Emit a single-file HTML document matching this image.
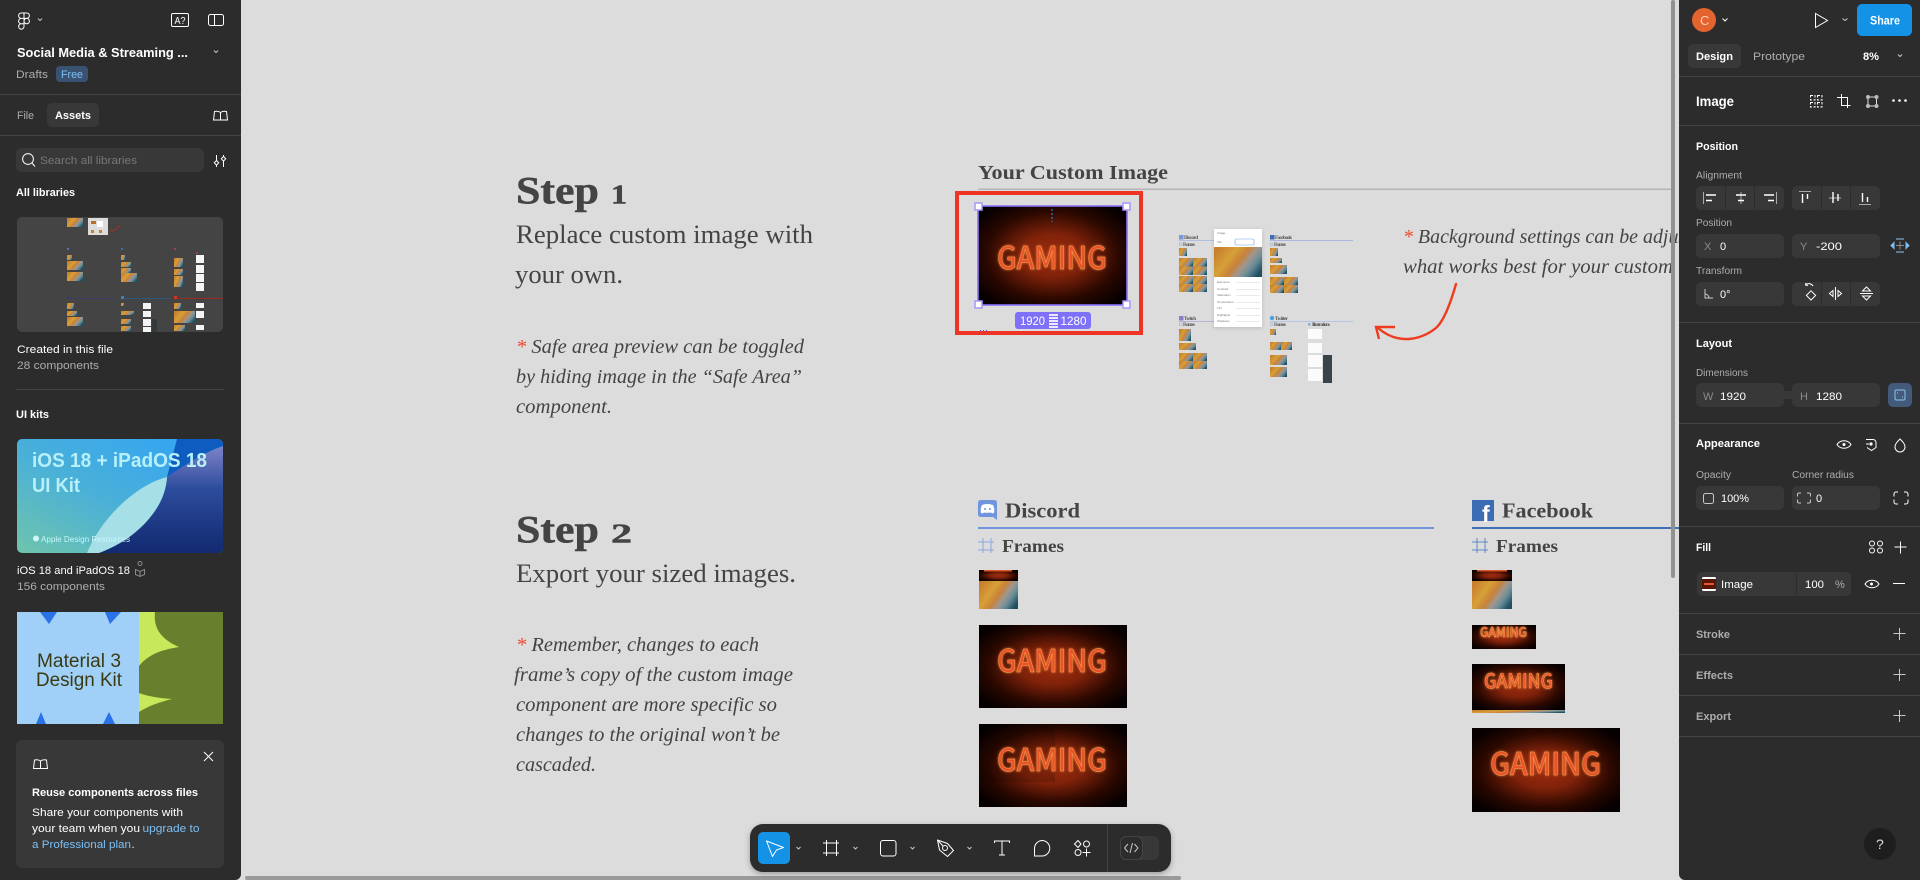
<!DOCTYPE html>
<html lang="en">
<head>
<meta charset="utf-8">
<title>Social Media &amp; Streaming</title>
<style>
html,body{margin:0;padding:0;width:1920px;height:880px;overflow:hidden;background:#dcdcdc}
.abs{position:absolute}
#lp{left:0;top:0;width:241px;height:880px;background:#2c2c2c;border-radius:0 0 6px 0}
#rp{left:1679px;top:0;width:241px;height:880px;background:#2c2c2c;border-radius:0 0 0 6px}
#tb{left:750px;top:824px;width:421px;height:48px;background:#2c2c2c;border-radius:13px;box-shadow:0 2px 6px rgba(0,0,0,.3)}
#cv,#ui{position:absolute;left:0;top:0}
.s{font-family:"Liberation Serif",serif;fill:#444}
.hv{font-weight:bold;stroke:#444;stroke-width:.5}
.si{font-family:"Liberation Serif",serif;font-style:italic;fill:#444;font-size:20px}
.u{font-family:"Liberation Sans",sans-serif;font-size:11px;fill:#fff}
.b{font-weight:bold}
.g{fill:#adadad}
.d{fill:#8a8a8a}
.lnk{fill:#7cc0f5}
.ln{fill:none;stroke:#fff;stroke-width:1}
.lg{fill:none;stroke:#c8c8c8;stroke-width:1}
.gm{font-family:"Noto Sans CJK JP","Liberation Sans",sans-serif;font-weight:500;fill:#e8522a;stroke:#f8a24c;stroke-width:.5;filter:url(#glow)}
.t3{font-family:"Liberation Sans",sans-serif;font-size:3px;fill:#777}
.t4{font-family:"Liberation Serif",serif;font-weight:bold;font-size:5px;fill:#555}
</style>
</head>
<body>
<svg id="cv" width="1920" height="880" viewBox="0 0 1920 880">
<defs>
<radialGradient id="rg" cx=".5" cy=".5" r=".62">
<stop offset="0" stop-color="#9c2c0e"/><stop offset=".35" stop-color="#80220a"/><stop offset=".72" stop-color="#2a0800"/><stop offset="1" stop-color="#060000"/>
</radialGradient>
<linearGradient id="mg" x1="0" y1=".25" x2="1" y2=".75">
<stop offset="0" stop-color="#c9802e"/><stop offset=".3" stop-color="#d6a038"/><stop offset=".5" stop-color="#c8823a"/><stop offset=".65" stop-color="#a0968e"/><stop offset=".8" stop-color="#6a8e98"/><stop offset="1" stop-color="#1f4f62"/>
</linearGradient>
<filter id="glow" x="-20%" y="-40%" width="140%" height="180%">
<feGaussianBlur stdDeviation="1.3" result="b"/><feMerge><feMergeNode in="b"/><feMergeNode in="SourceGraphic"/></feMerge>
</filter>
</defs>
<rect width="1920" height="880" fill="#dcdcdc"/>

<!-- Step 1 -->
<text class="s hv" x="516" y="203.5" font-size="39" textLength="83" lengthAdjust="spacingAndGlyphs">Step</text>
<text class="s hv" x="611" y="203.5" font-size="27" textLength="16" lengthAdjust="spacingAndGlyphs">1</text>
<text class="s" x="516" y="243" font-size="26" textLength="297" lengthAdjust="spacingAndGlyphs">Replace custom image with</text>
<text class="s" x="515" y="283" font-size="26" textLength="108" lengthAdjust="spacingAndGlyphs">your own.</text>
<text class="si" x="516" y="353" textLength="288" lengthAdjust="spacingAndGlyphs"><tspan fill="#ee4a30">*</tspan> Safe area preview can be toggled</text>
<text class="si" x="516" y="383" textLength="286" lengthAdjust="spacingAndGlyphs">by hiding image in the “Safe Area”</text>
<text class="si" x="516" y="413" textLength="96" lengthAdjust="spacingAndGlyphs">component.</text>

<!-- Step 2 -->
<text class="s hv" x="516" y="542.5" font-size="39" textLength="83" lengthAdjust="spacingAndGlyphs">Step</text>
<text class="s hv" x="611" y="542.5" font-size="27" textLength="21" lengthAdjust="spacingAndGlyphs">2</text>
<text class="s" x="516" y="582" font-size="26" textLength="280" lengthAdjust="spacingAndGlyphs">Export your sized images.</text>
<text class="si" x="516" y="651" textLength="243" lengthAdjust="spacingAndGlyphs"><tspan fill="#ee4a30">*</tspan> Remember, changes to each</text>
<text class="si" x="514" y="681" textLength="279" lengthAdjust="spacingAndGlyphs">frame’s copy of the custom image</text>
<text class="si" x="516" y="711" textLength="261" lengthAdjust="spacingAndGlyphs">component are more specific so</text>
<text class="si" x="516" y="741" textLength="264" lengthAdjust="spacingAndGlyphs">changes to the original won’t be</text>
<text class="si" x="516" y="771" textLength="80" lengthAdjust="spacingAndGlyphs">cascaded.</text>

<!-- Your custom image -->
<text class="s" font-weight="bold" x="978" y="179" font-size="20" textLength="190" lengthAdjust="spacingAndGlyphs">Your Custom Image</text>
<rect x="978" y="188.5" width="697" height="1.5" fill="#b5b5b5"/>
<rect x="957" y="193" width="184" height="140" fill="none" stroke="#ee3424" stroke-width="4"/>
<rect x="978" y="206" width="149" height="99" fill="url(#rg)"/>
<text class="gm" x="997" y="269" font-size="31" textLength="110" lengthAdjust="spacingAndGlyphs">GAMING</text>
<line x1="1052" y1="209" x2="1052" y2="222" stroke="#18a0fb" stroke-width="1" stroke-dasharray="2 2"/>
<rect x="978" y="206" width="149" height="99" fill="none" stroke="#8a72f8" stroke-width="1.6"/>
<g fill="#fff" stroke="#a896fa" stroke-width="1.5">
<rect x="975" y="203" width="7" height="7"/><rect x="1123" y="203" width="7" height="7"/><rect x="975" y="301" width="7" height="7"/><rect x="1123" y="301" width="7" height="7"/>
</g>
<rect x="1015" y="312" width="76" height="17" rx="3" fill="#7f70fa"/>
<text class="u" x="1020" y="325" style="font-size:12px" textLength="25" lengthAdjust="spacingAndGlyphs">1920</text>
<text class="u" x="1060.5" y="325" style="font-size:12px" textLength="26" lengthAdjust="spacingAndGlyphs">1280</text>
<g fill="#fff" opacity=".85"><rect x="1049" y="314" width="9" height="2"/><rect x="1049" y="317" width="9" height="2"/><rect x="1049" y="320" width="9" height="2"/><rect x="1049" y="323" width="9" height="2"/><rect x="1049" y="326" width="9" height="2"/></g>
<g fill="#5a50e0"><rect x="980" y="330" width="1" height="1.4"/><rect x="983" y="330" width="1" height="1.4"/><rect x="986" y="330" width="1" height="1.4"/></g>

<!-- mini map -->
<g>
<rect x="1179" y="235" width="4.5" height="4.5" fill="#7a9ade"/>
<text class="t4" x="1184" y="239" textLength="14">Discord</text>
<rect x="1179" y="240" width="36" height=".8" fill="#a8b8e0"/>
<rect x="1179.5" y="243" width="2.5" height="2.5" fill="none" stroke="#9ab" stroke-width=".5"/>
<text class="t4" x="1183" y="246" textLength="12">Frames</text>
<rect x="1179" y="248" width="8" height="8" fill="url(#mg)"/>
<rect x="1179" y="258" width="14" height="8.5" fill="url(#mg)"/><rect x="1193" y="258" width="14" height="8.5" fill="url(#mg)"/><rect x="1179" y="266.5" width="14" height="8.5" fill="url(#mg)"/><rect x="1193" y="266.5" width="14" height="8.5" fill="url(#mg)"/>
<rect x="1179" y="276" width="14" height="8" fill="url(#mg)"/><rect x="1193" y="276" width="14" height="8" fill="url(#mg)"/><rect x="1179" y="284" width="14" height="8" fill="url(#mg)"/><rect x="1193" y="284" width="14" height="8" fill="url(#mg)"/>

<rect x="1179" y="316" width="4.5" height="4.5" fill="#8a7ec8"/>
<text class="t4" x="1184" y="320" textLength="12">Twitch</text>
<rect x="1179" y="321" width="36" height=".8" fill="#b0aad6"/>
<rect x="1179.5" y="323" width="2.5" height="2.5" fill="none" stroke="#9ab" stroke-width=".5"/>
<text class="t4" x="1183" y="326" textLength="12">Frames</text>
<rect x="1179" y="329" width="12" height="12" fill="url(#mg)"/>
<rect x="1179" y="343" width="17" height="7" fill="url(#mg)"/>
<rect x="1179" y="353" width="14" height="8" fill="url(#mg)"/><rect x="1193" y="353" width="14" height="8" fill="url(#mg)"/><rect x="1179" y="361" width="14" height="8" fill="url(#mg)"/><rect x="1193" y="361" width="14" height="8" fill="url(#mg)"/>

<rect x="1270" y="235" width="4.5" height="4.5" fill="#3b6cb4"/>
<text class="t4" x="1275" y="239" textLength="17">Facebook</text>
<rect x="1270" y="240" width="83" height=".8" fill="#9ab0da"/>
<rect x="1270.5" y="243" width="2.5" height="2.5" fill="none" stroke="#9ab" stroke-width=".5"/>
<text class="t4" x="1274" y="246" textLength="12">Frames</text>
<rect x="1270" y="248" width="8" height="8" fill="url(#mg)"/>
<rect x="1270" y="258" width="12" height="5" fill="url(#mg)"/>
<rect x="1270" y="265" width="17" height="9" fill="url(#mg)"/>
<rect x="1270" y="277" width="14" height="8" fill="url(#mg)"/><rect x="1284" y="277" width="14" height="8" fill="url(#mg)"/><rect x="1270" y="285" width="14" height="8" fill="url(#mg)"/><rect x="1284" y="285" width="14" height="8" fill="url(#mg)"/>

<circle cx="1272" cy="318" r="2.2" fill="#4a9fe0"/>
<text class="t4" x="1275" y="320" textLength="13">Twitter</text>
<rect x="1270" y="321" width="83" height=".8" fill="#a8c4e4"/>
<rect x="1270.5" y="323" width="2.5" height="2.5" fill="none" stroke="#9ab" stroke-width=".5"/>
<text class="t4" x="1274" y="326" textLength="12">Frames</text>
<rect x="1308" y="323" width="2.5" height="2.5" fill="#8ab0d8"/>
<text class="t4" x="1312" y="326" textLength="18">Illustrations</text>
<rect x="1270" y="329" width="6" height="6" fill="url(#mg)"/>
<rect x="1270" y="342" width="11" height="8" fill="url(#mg)"/><rect x="1281" y="342" width="11" height="8" fill="url(#mg)"/>
<rect x="1270" y="355" width="17" height="10" fill="url(#mg)"/>
<rect x="1270" y="367" width="17" height="10" fill="url(#mg)"/>
<g fill="#fbfbfb"><rect x="1308" y="329" width="14" height="10"/><rect x="1308" y="343" width="14" height="10"/><rect x="1308" y="355" width="14" height="12"/><rect x="1308" y="369" width="14" height="12"/></g>
<rect x="1323" y="355" width="9" height="28" fill="#39434a"/>

<rect x="1214" y="229" width="48" height="98" fill="#fff" style="filter:drop-shadow(0 1px 2px rgba(0,0,0,.15))"/>
<text class="t3" x="1217" y="234" fill="#333">Image</text>
<text class="t3" x="1217" y="243">Tile</text>
<rect x="1235" y="239" width="19" height="6" rx="1" fill="#fff" stroke="#6aa8e8" stroke-width=".6"/>
<rect x="1214" y="247" width="48" height="30" fill="url(#mg)"/>
<g><text class="t3" x="1217" y="283">Exposure</text><text class="t3" x="1217" y="290">Contrast</text><text class="t3" x="1217" y="296">Saturation</text><text class="t3" x="1217" y="303">Temperature</text><text class="t3" x="1217" y="309">Tint</text><text class="t3" x="1217" y="316">Highlights</text><text class="t3" x="1217" y="322">Shadows</text></g>
<g fill="#e2e2e2"><rect x="1236" y="282" width="24" height=".7"/><rect x="1236" y="289" width="24" height=".7"/><rect x="1236" y="295" width="24" height=".7"/><rect x="1236" y="302" width="24" height=".7"/><rect x="1236" y="308" width="24" height=".7"/><rect x="1236" y="315" width="24" height=".7"/><rect x="1236" y="321" width="24" height=".7"/></g>
</g>

<!-- note and arrow -->
<text class="si" x="1403" y="243" textLength="328" lengthAdjust="spacingAndGlyphs"><tspan fill="#ee4a30">*</tspan> Background settings can be adjusted to</text>
<text class="si" x="1403" y="273" textLength="331" lengthAdjust="spacingAndGlyphs">what works best for your custom image.</text>
<path d="M1456 284C1450 305 1444 320 1437 327C1425 338 1400 347 1378 328" fill="none" stroke="#ee3c20" stroke-width="2.4" stroke-linecap="round"/>
<path d="M1395 327H1376L1379 339" fill="none" stroke="#ee3c20" stroke-width="2.4"/>

<!-- Discord -->
<path d="M981 500H994Q997 500 997 503V520L993 517H981Q978 517 978 514V503Q978 500 981 500Z" fill="#6f96dd"/>
<path d="M982 505Q987 503 993 505Q995 509 994 513Q992 514 991 512.5Q987 513 984 512.5Q983 514 981 513Q980 509 982 505Z" fill="#fff"/>
<circle cx="985" cy="509" r="1" fill="#6f96dd"/><circle cx="990" cy="509" r="1" fill="#6f96dd"/>
<text class="s" font-weight="bold" x="1005" y="517.5" font-size="21" textLength="75" lengthAdjust="spacingAndGlyphs">Discord</text>
<rect x="978" y="527" width="456" height="2" fill="#7396dc"/>
<path d="M983 538V553M991 538V553M978 542H994M978 550H994" fill="none" stroke="#8aa6e0" stroke-width="1"/>
<text class="s" font-weight="bold" x="1002" y="552" font-size="18" textLength="62" lengthAdjust="spacingAndGlyphs">Frames</text>
<rect x="979" y="581" width="39" height="28" fill="url(#mg)"/>
<rect x="979" y="570" width="39" height="11" fill="url(#rg)"/>
<rect x="984" y="570" width="28" height="1.5" fill="#e0582a"/>
<rect x="979" y="625" width="148" height="83" fill="url(#rg)"/>
<text class="gm" x="997" y="672" font-size="31" textLength="110" lengthAdjust="spacingAndGlyphs">GAMING</text>
<rect x="979" y="724" width="148" height="83" fill="url(#rg)"/>
<rect x="979" y="724" width="76" height="58" fill="#000" opacity=".14"/>
<text class="gm" x="997" y="771" font-size="31" textLength="110" lengthAdjust="spacingAndGlyphs">GAMING</text>

<!-- Facebook -->
<rect x="1472" y="500" width="22" height="21" fill="#3b6cb4"/>
<text x="1482" y="522" font-family="Liberation Sans, sans-serif" font-weight="bold" font-size="23" fill="#fff">f</text>
<text class="s" font-weight="bold" x="1502" y="517.5" font-size="21" textLength="91" lengthAdjust="spacingAndGlyphs">Facebook</text>
<rect x="1472" y="527" width="207" height="2" fill="#3f70b8"/>
<path d="M1477 538V553M1485 538V553M1472 542H1488M1472 550H1488" fill="none" stroke="#5f88c4" stroke-width="1"/>
<text class="s" font-weight="bold" x="1496" y="552" font-size="18" textLength="62" lengthAdjust="spacingAndGlyphs">Frames</text>
<rect x="1472" y="581" width="40" height="28" fill="url(#mg)"/>
<rect x="1472" y="570" width="40" height="11" fill="url(#rg)"/>
<rect x="1477" y="570" width="30" height="1.5" fill="#e0582a"/>
<rect x="1472" y="625" width="64" height="24" fill="url(#rg)"/>
<text class="gm" x="1480" y="637" font-size="13.5" textLength="47" lengthAdjust="spacingAndGlyphs">GAMING</text>
<rect x="1472" y="710" width="93" height="3" fill="url(#mg)"/>
<rect x="1472" y="664" width="93" height="46" fill="url(#rg)"/>
<text class="gm" x="1484" y="688" font-size="20" textLength="69" lengthAdjust="spacingAndGlyphs">GAMING</text>
<rect x="1472" y="728" width="148" height="84" fill="url(#rg)"/>
<text class="gm" x="1490" y="775" font-size="31" textLength="111" lengthAdjust="spacingAndGlyphs">GAMING</text>

<!-- scrollbars -->
<rect x="1671" y="0" width="4" height="578" rx="2" fill="#919191"/>
<rect x="245" y="876" width="936" height="4" rx="2" fill="#9a9a9a"/>
</svg>

<div id="lp" class="abs"></div>
<div id="rp" class="abs"></div>
<div id="tb" class="abs"></div>

<svg id="ui" width="1920" height="880" viewBox="0 0 1920 880">
<!-- LEFT PANEL -->
<g fill="#444"><rect x="0" y="94" width="241" height="1"/><rect x="0" y="135" width="241" height="1"/><rect x="16" y="389" width="208" height="1"/></g>
<path d="M24 13h-2.7a2.7 2.7 0 0 0 0 5.4H24zM24 13h2.7a2.7 2.7 0 0 1 0 5.4H24zM24 18.4h-2.7a2.7 2.7 0 0 0 0 5.4H24zM21.3 23.8H24v2.7a2.7 2.7 0 1 1-2.7-2.7z" class="ln"/>
<circle cx="26.7" cy="21.1" r="2.7" class="ln"/>
<path d="M38 18.5l2 2 2-2" class="lg"/>
<rect x="171.5" y="13.5" width="17" height="13" rx="1.5" class="ln"/>
<text class="u" x="174.5" y="24" style="font-size:10px" textLength="11" lengthAdjust="spacingAndGlyphs">A?</text>
<rect x="208.5" y="14.5" width="15" height="11" rx="2" class="ln"/><path d="M214.5 14.5v11" class="ln"/>
<text class="u b" x="17" y="57" style="font-size:13px" textLength="171" lengthAdjust="spacingAndGlyphs">Social Media &amp; Streaming ...</text>
<path d="M214 50.5l2 2 2-2" class="lg"/>
<text class="u g" x="16" y="78" textLength="32" lengthAdjust="spacingAndGlyphs">Drafts</text>
<rect x="56" y="66" width="32" height="16" rx="4" fill="#3a5272"/>
<text class="u lnk" x="61" y="78" textLength="22" lengthAdjust="spacingAndGlyphs">Free</text>
<text class="u g" x="17" y="119" textLength="17" lengthAdjust="spacingAndGlyphs">File</text>
<rect x="47" y="103" width="52" height="24" rx="5" fill="#383838"/>
<text class="u b" x="55" y="119" textLength="36" lengthAdjust="spacingAndGlyphs">Assets</text>
<path d="M220.5 112.5c-2-1.5-4-1.5-6-1l-1 8.5h7M220.5 112.5c2-1.5 4-1.5 6-1l1 8.5h-7v-7.5" class="ln"/>
<rect x="16" y="148" width="188" height="24" rx="5" fill="#383838"/>
<circle cx="28" cy="159" r="5.4" class="ln"/><path d="M32 163l3 3.5" class="ln"/>
<text class="u" x="40" y="164" style="fill:#777" textLength="97" lengthAdjust="spacingAndGlyphs">Search all libraries</text>
<path d="M216.5 155v6M216.5 165v2M223.5 155v2M223.5 161v6" class="ln"/><path d="M216.5 160.5l2.2 2.3-2.2 2.3-2.2-2.3zM223.5 156.5l2.2 2.3-2.2 2.3-2.2-2.3z" class="ln"/>
<text class="u b" x="16" y="196" textLength="59" lengthAdjust="spacingAndGlyphs">All libraries</text>

<rect x="17" y="217" width="206" height="115" rx="5" fill="#444"/>
<g fill="url(#mg)">
<rect x="67" y="218" width="16" height="9"/>
<rect x="67" y="255" width="5" height="5"/><rect x="67" y="261" width="16" height="9"/><rect x="67" y="272" width="16" height="9"/>
<rect x="121" y="255" width="4" height="5"/><rect x="121" y="262" width="10" height="5"/><rect x="121" y="268" width="10" height="5"/><rect x="121" y="273" width="16" height="9"/>
<rect x="174" y="258" width="9" height="9"/><rect x="174" y="269" width="9" height="6"/><rect x="174" y="276" width="9" height="11"/>
<rect x="67" y="303" width="7" height="6"/><rect x="67" y="311" width="10" height="5"/><rect x="67" y="317" width="16" height="9"/>
<rect x="121" y="303" width="3" height="3"/><rect x="121" y="311" width="13" height="4"/><rect x="121" y="319" width="10" height="5"/><rect x="121" y="326" width="10" height="5"/>
<rect x="174" y="303" width="7" height="6"/><rect x="174" y="311" width="21" height="12"/><rect x="174" y="325" width="11" height="6"/>
</g>
<rect x="88" y="218" width="20" height="17" fill="#dcdcdc"/>
<rect x="91" y="221" width="5" height="3" fill="#b8712c"/><rect x="97" y="221" width="6" height="6" fill="#fff"/><rect x="91" y="230" width="3" height="3" fill="#c8812c"/><rect x="99" y="230" width="3" height="3" fill="#c8812c"/>
<path d="M119 225c-1 4-5 7-9 5" fill="none" stroke="#a83020" stroke-width="1"/>
<g fill="#f4f4f4"><rect x="196" y="255" width="8" height="8"/><rect x="196" y="265" width="8" height="8"/><rect x="196" y="274" width="8" height="8"/><rect x="196" y="283" width="8" height="8"/>
<rect x="143" y="303" width="8" height="6"/><rect x="143" y="311" width="8" height="6"/><rect x="143" y="319" width="8" height="7"/><rect x="143" y="327" width="8" height="5"/>
<rect x="196" y="303" width="8" height="5"/><rect x="196" y="311" width="8" height="7"/><rect x="196" y="325" width="8" height="5"/></g>
<rect x="152" y="319" width="5" height="13" fill="#333a3c"/>
<rect x="67" y="248" width="2" height="2" fill="#6070b0"/><rect x="121" y="248" width="2" height="2" fill="#4070a0"/><rect x="174" y="248" width="2" height="2" fill="#a04060"/><rect x="196" y="252" width="2" height="2" fill="#a04040"/>
<rect x="67" y="298" width="48" height="1" fill="#3e3a6a"/><rect x="121" y="298" width="49" height="1" fill="#2c5a80"/><rect x="174" y="298" width="49" height="1" fill="#9c2a20"/>
<rect x="67" y="296" width="3" height="3" fill="#3e3a6a"/><rect x="121" y="296" width="3" height="3" fill="#4080b0"/><rect x="174" y="296" width="3" height="3" fill="#d03020"/>

<text class="u" x="17" y="353" textLength="96" lengthAdjust="spacingAndGlyphs">Created in this file</text>
<text class="u g" x="17" y="369" textLength="82" lengthAdjust="spacingAndGlyphs">28 components</text>
<text class="u b" x="16" y="418" textLength="33" lengthAdjust="spacingAndGlyphs">UI kits</text>

<!-- iOS card -->
<defs>
<linearGradient id="ios1" x1="0" y1="1" x2="1" y2="0"><stop offset="0" stop-color="#6fc4ac"/><stop offset=".45" stop-color="#4ab0d8"/><stop offset="1" stop-color="#30a2f8"/></linearGradient>
<linearGradient id="ios2" x1="0" y1="0" x2="0" y2="1"><stop offset="0" stop-color="#7f84c8"/><stop offset=".4" stop-color="#2c4c9c"/><stop offset="1" stop-color="#122a70"/></linearGradient>
<clipPath id="iosc"><rect x="17" y="439" width="206" height="114" rx="5"/></clipPath>
</defs>
<g clip-path="url(#iosc)">
<rect x="17" y="439" width="206" height="114" fill="url(#ios1)"/>
<path d="M87 553C120 545 165 520 167 477C185 465 205 452 223 446V553Z" fill="url(#ios2)"/>
<path d="M177 439H223V446C205 452 185 465 167 477Z" fill="#0f5cc0"/>
<path d="M87 553C100 520 135 485 167 477C165 510 135 540 99 553Z" fill="#a6dfe6"/>
</g>
<text class="u b" x="32" y="467" style="font-size:20px;fill:#b8f0fa" textLength="175" lengthAdjust="spacingAndGlyphs">iOS 18 + iPadOS 18</text>
<text class="u b" x="32" y="492" style="font-size:20px;fill:#b8f0fa" textLength="48" lengthAdjust="spacingAndGlyphs">UI Kit</text>
<circle cx="36" cy="538.5" r="3" fill="#cff6f6"/>
<text class="u" x="41" y="542" style="font-size:8px;fill:#c6f6fa" textLength="89" lengthAdjust="spacingAndGlyphs">Apple Design Resources</text>
<text class="u" x="17" y="574" textLength="113" lengthAdjust="spacingAndGlyphs">iOS 18 and iPadOS 18</text>
<path d="M140 565.5a2 2 0 1 1 .01 0M135.5 569.5l4.5 2 4.5-2v5l-4.5 2-4.5-2zM140 571.5v5" fill="none" stroke="#8a8a8a" stroke-width="1"/>
<text class="u g" x="17" y="590" textLength="88" lengthAdjust="spacingAndGlyphs">156 components</text>

<!-- Material card -->
<rect x="17" y="612" width="122" height="112" fill="#a0cff8"/>
<rect x="139" y="612" width="84" height="112" fill="#68802e"/>
<path d="M139 612H155C153 630 163 640 179 647C160 650 148 655 139 666Z" fill="#c6e85a"/>
<path d="M139 693C150 697 160 698 172 699C160 702 148 706 139 712Z" fill="#c6e85a"/>
<g fill="#2a72e8"><path d="M40 612H57L49 624Z"/><path d="M105 612H121L110 624Z"/><path d="M36 724H46L41 712Z"/><path d="M103 724H115L109 712Z"/></g>
<text class="u" x="37" y="667" style="font-size:19px;fill:#3a3a10" textLength="84" lengthAdjust="spacingAndGlyphs">Material 3</text>
<text class="u" x="36" y="686" style="font-size:19px;fill:#3a3a10" textLength="86" lengthAdjust="spacingAndGlyphs">Design Kit</text>

<!-- notice -->
<rect x="16" y="740" width="208" height="128" rx="6" fill="#383838"/>
<path d="M40.5 761c-2-1.5-4-1.5-6-1l-1 8.5h7M40.5 761c2-1.5 4-1.5 6-1l1 8.5h-7v-7.5" class="ln"/>
<path d="M204 752l9 9M213 752l-9 9" class="ln"/>
<text class="u b" x="32" y="796" textLength="166" lengthAdjust="spacingAndGlyphs">Reuse components across files</text>
<text class="u" x="32" y="816" textLength="151" lengthAdjust="spacingAndGlyphs">Share your components with</text>
<text class="u" x="32" y="832" textLength="108" lengthAdjust="spacingAndGlyphs">your team when you</text>
<text class="u lnk" x="142.5" y="832" textLength="57" lengthAdjust="spacingAndGlyphs">upgrade to</text>
<text class="u lnk" x="32" y="848" textLength="99" lengthAdjust="spacingAndGlyphs">a Professional plan</text>
<text class="u" x="131.5" y="848">.</text>

<!-- RIGHT PANEL -->
<g fill="#444"><rect x="1679" y="76" width="241" height="1"/><rect x="1679" y="125" width="241" height="1"/><rect x="1679" y="322" width="241" height="1"/><rect x="1679" y="423" width="241" height="1"/><rect x="1679" y="526" width="241" height="1"/><rect x="1679" y="613" width="241" height="1"/><rect x="1679" y="654" width="241" height="1"/><rect x="1679" y="695" width="241" height="1"/><rect x="1679" y="736" width="241" height="1"/></g>
<circle cx="1704" cy="20" r="12" fill="#e4632e"/>
<text class="u" x="1700" y="25" style="font-size:13px;fill:#fbcdb6">C</text>
<path d="M1722.5 18.5l2.5 2.5 2.5-2.5" class="ln"/>
<path d="M1815.5 13.5v14l12-7z" class="ln"/>
<path d="M1842.5 18.5l2.5 2 2.5-2" class="lg"/>
<rect x="1857" y="4" width="55" height="32" rx="5" fill="#1492e6"/>
<text class="u b" x="1870" y="24.5" style="font-size:11.5px" textLength="30" lengthAdjust="spacingAndGlyphs">Share</text>
<rect x="1688" y="44" width="53" height="24" rx="5" fill="#383838"/>
<text class="u b" x="1696" y="60" textLength="37" lengthAdjust="spacingAndGlyphs">Design</text>
<text class="u g" x="1753" y="60" textLength="52" lengthAdjust="spacingAndGlyphs">Prototype</text>
<text class="u b" x="1863" y="60" textLength="16" lengthAdjust="spacingAndGlyphs">8%</text>
<path d="M1898 54.5l2 2 2-2" class="lg"/>

<text class="u b" x="1696" y="106" style="font-size:13.5px" textLength="38" lengthAdjust="spacingAndGlyphs">Image</text>
<g stroke="#fff" fill="none" stroke-width="1" stroke-dasharray="2.5 1.5"><rect x="1810.5" y="95.5" width="4.5" height="4.5"/><rect x="1817.5" y="95.5" width="4.5" height="4.5"/><rect x="1810.5" y="102.5" width="4.5" height="4.5"/><rect x="1817.5" y="102.5" width="4.5" height="4.5"/></g>
<path d="M1841.5 94v11.5h9M1837 97.5h10.5V108" class="ln"/>
<rect x="1868" y="97" width="8.5" height="9" fill="none" stroke="#ddd"/>
<g fill="#bbb"><circle cx="1868" cy="97" r="2"/><circle cx="1876.5" cy="97" r="2"/><circle cx="1868" cy="106" r="2"/><circle cx="1876.5" cy="106" r="2"/></g>
<g fill="#fff"><circle cx="1893.5" cy="100.5" r="1.3"/><circle cx="1899.5" cy="100.5" r="1.3"/><circle cx="1905.5" cy="100.5" r="1.3"/></g>

<text class="u b" x="1696" y="150" textLength="42" lengthAdjust="spacingAndGlyphs">Position</text>
<text class="u g" x="1696" y="178.5" style="font-size:10px" textLength="46" lengthAdjust="spacingAndGlyphs">Alignment</text>
<g fill="#383838"><rect x="1696" y="186" width="88" height="24" rx="5"/><rect x="1792" y="186" width="88" height="24" rx="5"/><rect x="1696" y="234" width="88" height="24" rx="5"/><rect x="1792" y="234" width="88" height="24" rx="5"/><rect x="1696" y="282" width="88" height="24" rx="5"/><rect x="1792" y="282" width="88" height="24" rx="5"/><rect x="1696" y="383" width="88" height="24" rx="5"/><rect x="1792" y="383" width="88" height="24" rx="5"/><rect x="1696" y="486" width="88" height="24" rx="5"/><rect x="1792" y="486" width="88" height="24" rx="5"/><rect x="1697" y="572" width="154" height="24" rx="5"/></g>
<g fill="#2c2c2c"><rect x="1725" y="186" width="1" height="24"/><rect x="1754" y="186" width="1" height="24"/><rect x="1821" y="186" width="1" height="24"/><rect x="1850" y="186" width="1" height="24"/><rect x="1821" y="282" width="1" height="24"/><rect x="1850" y="282" width="1" height="24"/><rect x="1796" y="572" width="1" height="24"/></g>
<!-- alignment icons -->
<g stroke="#fff" fill="none" stroke-width="1.4">
<path d="M1703.5 192v12" stroke-width="1" stroke="#aaa"/><path d="M1706 195h10M1706 200.5h6"/>
<path d="M1741 192v12" stroke-width="1" stroke="#aaa"/><path d="M1736 195h10M1738 200.5h6"/>
<path d="M1776.5 192v12" stroke-width="1" stroke="#aaa"/><path d="M1764 195h10M1768 200.5h6"/>
<path d="M1799 191.5h12" stroke-width="1" stroke="#aaa"/><path d="M1802.5 194v9M1807.5 194v5"/>
<path d="M1829 198h12" stroke-width="1" stroke="#aaa"/><path d="M1833 192v11M1838 194v7"/>
<path d="M1859 204.5h12" stroke-width="1" stroke="#aaa"/><path d="M1862.5 193v9M1867.5 197v5"/>
</g>
<text class="u g" x="1696" y="226" style="font-size:10px" textLength="36" lengthAdjust="spacingAndGlyphs">Position</text>
<text class="u d" x="1704" y="250">X</text><text class="u" x="1720" y="250">0</text>
<text class="u d" x="1800" y="250">Y</text><text class="u" x="1816" y="250" textLength="26" lengthAdjust="spacingAndGlyphs">-200</text>
<path d="M1896 239h8M1896 252h8" stroke="#8fc4f0" stroke-width="1"/><path d="M1896 245.5h8M1900 241.5v8" stroke="#8a8a8a"/><path d="M1894 242.5l-3 3 3 3zM1906 242.5l3 3-3 3z" fill="#7cc0f5" stroke="#7cc0f5"/>
<text class="u g" x="1696" y="274" style="font-size:10px" textLength="46" lengthAdjust="spacingAndGlyphs">Transform</text>
<path d="M1705 289v9h8M1705 294a4 4 0 0 1 4 4" class="lg"/>
<text class="u" x="1720" y="298">0°</text>
<path d="M1806 284.5a5 5 0 0 1 7 1.5M1806 283l-.5 2 2.5.5M1806.5 295.5l-.1-.1 4.6-4.6 4.6 4.6-4.6 4.6z" class="ln"/>
<path d="M1835.5 287v13" class="ln"/><path d="M1833 290.5l-3.5 3 3.5 3zM1838 290.5l3.5 3-3.5 3z" class="ln"/>
<path d="M1860 293.5h13" class="ln"/><path d="M1862.5 291l4-4 4 4zM1862.5 296l4 4 4-4z" class="ln"/>

<text class="u b" x="1696" y="347" textLength="36" lengthAdjust="spacingAndGlyphs">Layout</text>
<text class="u g" x="1696" y="376" style="font-size:10px" textLength="52" lengthAdjust="spacingAndGlyphs">Dimensions</text>
<text class="u d" x="1703" y="400" textLength="10">W</text><text class="u" x="1720" y="400" textLength="26" lengthAdjust="spacingAndGlyphs">1920</text>
<text class="u d" x="1800" y="400">H</text><text class="u" x="1816" y="400" textLength="26" lengthAdjust="spacingAndGlyphs">1280</text>
<rect x="1784" y="391" width="8" height="8" fill="#383838"/>
<rect x="1888" y="383" width="24" height="24" rx="5" fill="#435a7a"/>
<rect x="1895" y="390" width="10" height="10" rx="1.5" fill="none" stroke="#8cc4f2"/><path d="M1902 397h1M1897 393h1" stroke="#8cc4f2"/>

<text class="u b" x="1696" y="447" textLength="64" lengthAdjust="spacingAndGlyphs">Appearance</text>
<path d="M1837 444.5c3-5 11-5 14 0c-3 5-11 5-14 0z" class="ln"/><circle cx="1844" cy="444.5" r="1.5" fill="#fff"/>
<path d="M1866 439.5h7a3 3 0 0 1 3 3v5l-4.5 3-4.5-3" class="ln"/><circle cx="1871" cy="444" r="1.6" fill="#fff"/><path d="M1866 444h3" class="ln"/>
<path d="M1900 439c3 3 5 5 5 8a5 5 0 0 1-10 0c0-3 2-5 5-8z" class="ln"/>
<text class="u g" x="1696" y="478" style="font-size:10px" textLength="35" lengthAdjust="spacingAndGlyphs">Opacity</text>
<text class="u g" x="1792" y="478" style="font-size:10px" textLength="62" lengthAdjust="spacingAndGlyphs">Corner radius</text>
<rect x="1703.5" y="493.5" width="10" height="10" rx="2" fill="none" stroke="#c8c8c8"/>
<text class="u" x="1721" y="502" textLength="28" lengthAdjust="spacingAndGlyphs">100%</text>
<path d="M1801 493h-2a1.5 1.5 0 0 0-1.5 1.5v2M1807 493h2a1.5 1.5 0 0 1 1.5 1.5v2M1801 503h-2a1.5 1.5 0 0 1-1.5-1.5v-2M1807 503h2a1.5 1.5 0 0 0 1.5-1.5v-2" class="lg"/>
<text class="u" x="1816" y="502">0</text>
<path d="M1898 492h-2a2 2 0 0 0-2 2v2.5M1904 492h2a2 2 0 0 1 2 2v2.5M1898 504h-2a2 2 0 0 1-2-2v-2.5M1904 504h2a2 2 0 0 0 2-2v-2.5" class="ln"/>

<text class="u b" x="1696" y="551" textLength="15" lengthAdjust="spacingAndGlyphs">Fill</text>
<g class="ln"><circle cx="1872" cy="543.5" r="2.5"/><circle cx="1880" cy="543.5" r="2.5"/><circle cx="1872" cy="550.5" r="2.5"/><circle cx="1880" cy="550.5" r="2.5"/></g>
<path d="M1900.5 541.5v12M1894.5 547h12" class="ln"/>
<rect x="1702" y="577" width="14" height="14" rx="1.5" fill="#fff"/><rect x="1702" y="579" width="14" height="10" fill="#5a1505"/><rect x="1704" y="583" width="10" height="2" fill="#e05a2a"/>
<text class="u" x="1721" y="588" textLength="32" lengthAdjust="spacingAndGlyphs">Image</text>
<text class="u" x="1805" y="588" textLength="19" lengthAdjust="spacingAndGlyphs">100</text>
<text class="u g" x="1835" y="588">%</text>
<path d="M1865 584c3-5 11-5 14 0c-3 5-11 5-14 0z" class="ln"/><circle cx="1871.5" cy="584" r="1.5" fill="#fff"/>
<path d="M1893 583.5h12" class="ln"/>
<text class="u b g" x="1696" y="638" textLength="34" lengthAdjust="spacingAndGlyphs">Stroke</text>
<path d="M1899.5 628v12M1893.5 633.5h12" class="lg"/>
<text class="u b g" x="1696" y="679" textLength="37" lengthAdjust="spacingAndGlyphs">Effects</text>
<path d="M1899.5 669v12M1893.5 674.5h12" class="lg"/>
<text class="u b g" x="1696" y="720" textLength="35" lengthAdjust="spacingAndGlyphs">Export</text>
<path d="M1899.5 710v12M1893.5 715.5h12" class="lg"/>
<circle cx="1880" cy="844" r="16" fill="#1e1e1e"/>
<text class="u" x="1876" y="849" style="font-size:14px;fill:#ddd">?</text>

<!-- TOOLBAR -->
<rect x="758" y="832" width="32" height="32" rx="5" fill="#1492e6"/>
<path d="M766.5 841l17 6.5-7 2.5-4 6.5z" class="ln" stroke-linejoin="round"/>
<path d="M796.5 847l2 2 2-2M853.5 847l2 2 2-2M910.5 847l2 2 2-2M967.5 847l2 2 2-2" class="lg"/>
<path d="M826.5 840v16M836.5 840v16M823 843h16M823 853h16" class="ln"/>
<rect x="880.5" y="840.5" width="15.5" height="15.5" rx="2.5" class="ln"/>
<path d="M937.5 840l10 3.5 6 7-6 6-8-6.5z" class="ln" stroke-linejoin="round"/><circle cx="945" cy="848" r="2.5" class="ln"/><path d="M937.5 840l5.5 6" class="ln"/>
<path d="M994.5 843v-2h15v2M1002 841v14M999 855h6" class="ln"/>
<path d="M1042 840.5a7.7 7.7 0 0 1 0 15.5h-7.5v-7.5a8 8 0 0 1 7.5-8z" class="ln"/>
<path d="M1078 840.5l3 3.5-3 3.5-3.5-3.5z" class="ln"/><circle cx="1086.5" cy="844" r="3" class="ln"/><circle cx="1078" cy="852.5" r="3" class="ln"/><path d="M1086.5 848.5v8M1082.5 852.5h8" class="ln"/>
<rect x="1107" y="824" width="1" height="48" fill="#444"/>
<rect x="1120" y="836" width="39" height="24" rx="6" fill="#383838"/>
<rect x="1120.5" y="836.5" width="22" height="23" rx="6" fill="#2c2c2c" stroke="#444"/>
<path d="M1128 844l-3.5 4 3.5 4M1134.5 844l3.5 4-3.5 4M1132.5 843l-2.5 10" class="lg"/>
</svg>
</body>
</html>
